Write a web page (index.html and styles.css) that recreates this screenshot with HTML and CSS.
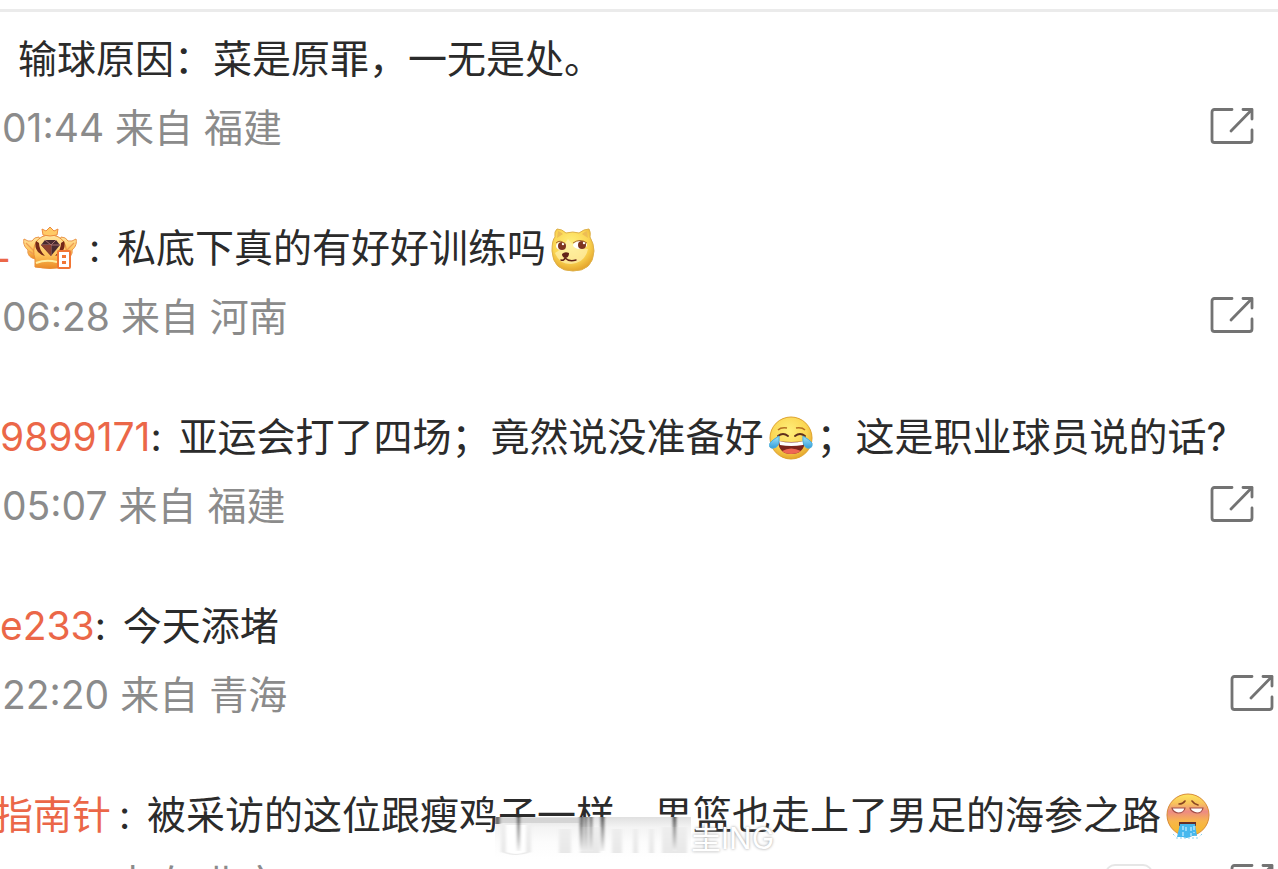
FILE: index.html
```html
<!DOCTYPE html>
<html lang="zh-CN">
<head>
    <meta charset="UTF-8">
    <meta name="viewport" content="width=device-width, initial-scale=1.0">
    <title>评论</title>
    <link rel="stylesheet" href="styles.css">
</head>
<body>
    <svg class="sprite" aria-hidden="true">
        <symbol id="share" viewBox="0 0 44 38">
            <path d="M22 2.500H4.500Q2 2.500 2 5V33Q2 35.500 4.500 35.500H39.500Q42 35.500 42 33V23M33 2.500H42V12M42 2.500 21 24" fill="none" stroke="#737373" stroke-width="2.800" stroke-linecap="round" stroke-linejoin="round"/>
        </symbol>
        <radialGradient id="face" cx="45%" cy="35%" r="65%">
            <stop offset="0" stop-color="#fff07c"/>
            <stop offset=".65" stop-color="#fbd653"/>
            <stop offset="1" stop-color="#e5a62d"/>
        </radialGradient>
        <linearGradient id="gold" x2="0" y2="1">
            <stop offset="0" stop-color="#ffe5a0"/>
            <stop offset=".6" stop-color="#ffc45b"/>
            <stop offset="1" stop-color="#e98925"/>
        </linearGradient>
        <linearGradient id="blush" x2="0" y2="1">
            <stop offset="0" stop-color="#ffe65f"/>
            <stop offset=".22" stop-color="#f8c45b"/>
            <stop offset=".42" stop-color="#ed8a83"/>
            <stop offset=".65" stop-color="#f8b64b"/>
            <stop offset="1" stop-color="#f5ba23"/>
        </linearGradient>
        <linearGradient id="tear" x2="0" y2="1">
            <stop offset="0" stop-color="#a5e5fb"/>
            <stop offset="1" stop-color="#349fda"/>
        </linearGradient>
    </svg>

    <main class="comments">
        <article class="comment">
            <p class="text indent">输球原因：菜是原罪，一无是处。</p>
            <div class="info">
                <span>01:44 来自 福建</span>
                <button class="share" aria-label="分享"><svg><use href="#share"/></svg></button>
            </div>
        </article>

        <article class="comment">
            <p class="text">
                <a class="name initial" href="#">L</a>
                <svg class="crown" viewBox="0 0 54 44" role="img" aria-label="会员">
                    <path d="M14 33C7 33 4 28 5 24C1 21 0 16 1 13Q5 16 9 15Q11 11 16 11L22 32ZM40 33C47 33 50 28 49 24C53 21 54 16 53 13Q49 16 45 15Q43 11 38 11L32 32Z" fill="url(#gold)" stroke="#ea9548"/>
                    <path d="M3 17 13 27M6 25 13 30M51 17 41 27M48 25 41 30" stroke="#ee9d55" stroke-width="1.300" fill="none"/>
                    <path d="M12 41V33Q9 24 13 16Q18 9 27 9Q36 9 41 16Q45 24 42 33V41Q27 44 12 41Z" fill="url(#gold)" stroke="#e98d35"/>
                    <path d="M20 9 19 3 23 5 27 1 31 5 35 3 34 9Q27 11 20 9Z" fill="#ffca66" stroke="#ed8b3f"/>
                    <path d="M13 15Q11 21 15 26Q18 29 22 30Q16 24 16 17ZM41 15Q43 21 39 26Q36 29 32 30Q38 24 38 17Z" fill="#742819"/>
                    <path d="M22 14H33L37 19 28 30 18 19Z" fill="#482b30"/>
                    <path d="M22 14 28 19 33 14M28 19V30M18 19H37" fill="none" stroke="#a8706d"/>
                    <path d="M18 19h10v11z" fill="#8c402f"/>
                    <path d="M13 37Q23 33 34 36" fill="none" stroke="#fff0a6" stroke-width="2"/>
                    <rect x="35" y="25" width="12" height="17" rx="1" fill="#fff" stroke="#f17634" stroke-width="2"/>
                    <path d="M39 29h4v3h-4zM39 35h4v3h-4z" fill="#f17634"/>
                </svg>
                <span class="colon">:</span>私底下真的有好好训练吗<svg class="emoji" viewBox="0 0 44 46" role="img" aria-label="狗头">
                    <path d="M1 25Q1 14 4 11Q3 5 6 3Q11 3 15 7Q22 5 28 7Q33 3 38 3Q40 6 39 11Q43 18 43 25Q42 45 22 45Q2 45 1 25Z" fill="url(#face)" stroke="#deb14b"/>
                    <path d="M7 5Q10 6 12 8L6 12ZM36 5Q33 6 31 8L37 12Z" fill="#edbd55"/>
                    <path d="M4 27Q10 24 17 13Q23 23 37 23Q34 37 20 38Q8 38 4 27Z" fill="#fff3bd" opacity=".6"/>
                    <ellipse cx="10" cy="20" rx="5" ry="4" fill="#fff"/>
                    <ellipse cx="29" cy="19" rx="7" ry="4" fill="#fff"/>
                    <circle cx="11" cy="20" r="4" fill="#7d3521"/>
                    <circle cx="31" cy="19" r="4" fill="#7d3521"/>
                    <circle cx="12" cy="18" r="1.200" fill="#fff"/>
                    <circle cx="33" cy="17" r="1.200" fill="#fff"/>
                    <path d="M5 17Q9 13 14 18M22 17Q29 12 36 17" fill="none" stroke="#a7652d"/>
                    <path d="M11 28Q14 25 18 27Q18 32 14 32Q11 31 11 28Z" fill="#632219"/>
                    <path d="M14 32Q13 35 10 34M14 32Q18 36 25 34" fill="none" stroke="#632219" stroke-width="1.500" stroke-linecap="round"/>
                </svg>
            </p>
            <div class="info">
                <span>06:28 来自 河南</span>
                <button class="share" aria-label="分享"><svg><use href="#share"/></svg></button>
            </div>
        </article>

        <article class="comment">
            <p class="text">
                <a class="name" href="#">9899171</a><span class="colon narrow">:</span>亚运会打了四场；竟然说没准备好<svg class="emoji" viewBox="0 0 44 46" role="img" aria-label="笑cry">
                    <circle cx="22" cy="23" r="21" fill="url(#face)" stroke="#dfa32d"/>
                    <path d="M9 15Q12 12 18 13M27 13Q33 12 36 15" fill="none" stroke="#b66f21" stroke-width="1.500"/>
                    <path d="M9 21Q14 17 19 21M26 21Q31 17 36 21" fill="none" stroke="#60301b" stroke-width="2" stroke-linecap="round"/>
                    <path d="M9 26Q22 28 36 26Q35 39 22 39Q10 39 9 26Z" fill="#7b241c"/>
                    <path d="M10 26Q22 29 35 26L34 30Q22 32 11 30Z" fill="#fff"/>
                    <path d="M13 36Q22 31 32 36Q28 39 22 39Q16 39 13 36Z" fill="#ef6754"/>
                    <path d="M10 21Q11 32 5 33Q-1 34 1 28Q3 25 10 21ZM34 21Q33 31 38 33Q44 34 43 28Q41 25 34 21Z" fill="url(#tear)" stroke="#4daeda"/>
                </svg>；这是职业球员说的话?
            </p>
            <div class="info">
                <span>05:07 来自 福建</span>
                <button class="share" aria-label="分享"><svg><use href="#share"/></svg></button>
            </div>
        </article>

        <article class="comment edge">
            <p class="text">
                <a class="name" href="#">e233</a><span class="colon narrow">:</span>今天添堵
            </p>
            <div class="info">
                <span>22:20 来自 青海</span>
                <button class="share" aria-label="分享"><svg><use href="#share"/></svg></button>
            </div>
        </article>

        <article class="comment edge">
            <p class="text">
                <a class="name cut" href="#">指南针</a><span class="colon">:</span>被采访的这位跟瘦鸡子一样，男篮也走上了男足的海参之路<svg class="emoji" viewBox="0 0 44 46" role="img" aria-label="吐">
                    <circle cx="22" cy="22" r="21" fill="url(#blush)" stroke="#d88b36"/>
                    <path d="M13 11Q17 11 19 8M26 8Q28 11 32 12" fill="none" stroke="#884522" stroke-width="1.600" stroke-linecap="round"/>
                    <path d="M6 15H19Q18 20 12 20Q7 19 6 15ZM24 15H37Q36 20 31 20Q25 19 24 15Z" fill="#fff" stroke="#a25149" stroke-width="1.200"/>
                    <path d="M13 29H30V33H13Z" fill="#642e29"/>
                    <path d="M14 31H29L31 43Q27 42 24 44Q20 46 17 44L11 44Z" fill="#46b8ee"/>
                    <path d="M17 33v10M20 34v5M25 34v9M28 33v7" stroke="#bdeaff" stroke-width="1.300" stroke-dasharray="4 2"/>
                    <path d="M7 41 10 44M36 41 33 44M10 45h24" stroke="#8bd1ee" stroke-dasharray="2 2"/>
                </svg>
            </p>
            <div class="info">
                <span>10:30 来自 北京</span>
                <button class="more" aria-label="更多"></button>
                <button class="share" aria-label="分享"><svg><use href="#share"/></svg></button>
            </div>
        </article>
    </main>

    <div class="watermark">
        <svg class="smear" viewBox="0 0 196 42" aria-hidden="true">
            <defs>
                <linearGradient id="haze" x2="0" y2="1">
                    <stop offset="0" stop-color="#e0e0e0"/>
                    <stop offset=".25" stop-color="#f4f4f4"/>
                    <stop offset=".6" stop-color="#fcfcfc"/>
                    <stop offset="1" stop-color="#fff"/>
                </linearGradient>
                <linearGradient id="streak" x2="0" y2="1">
                    <stop offset="0" stop-color="#333"/>
                    <stop offset=".4" stop-color="#888"/>
                    <stop offset="1" stop-color="#f0f0f0"/>
                </linearGradient>
                <linearGradient id="shade" x2="0" y2="1">
                    <stop offset="0" stop-color="#eee"/>
                    <stop offset="1" stop-color="#e2e2e2"/>
                </linearGradient>
                <filter id="soft" x="-5%" width="110%"><feGaussianBlur stdDeviation="1.500 0.600"/></filter>
            </defs>
            <rect width="196" height="42" fill="url(#haze)"/>
            <g filter="url(#soft)">
                <path d="M6 6h30v29q-15 6-30 0zM64 12h12v24H64zM85 10h20v26H85zM117 12h10v24h-10zM138 12h5v24h-5zM154 12h5v24h-5zM167 10h25v26h-25z" fill="url(#shade)" opacity=".8"/>
                <path d="M11 8h20v27q-10 4-20 0z" fill="#fff"/>
                <path d="M0 0h5v7H0z" fill="#666"/>
                <path d="M5 1h80v5H5z" fill="#ccc" opacity=".7"/>
                <path d="M22 0h3v34h-3zM85 0h3v34h-3zM90 0h2v34h-2zM95 0h2v34h-2zM106 0h3v34h-3zM178 0h3v34h-3z" fill="url(#streak)"/>
            </g>
        </svg>
        <span>圭ING</span>
    </div>
</body>
</html>
```

FILE: styles.css
```css
* {
    margin: 0;
    padding: 0;
    box-sizing: border-box;
}

body {
    position: relative;
    height: 100vh;
    overflow: hidden;
    background-color: #fff;
    color: #2b2b2b;
    font-family: Inter, "Noto Sans CJK SC", sans-serif;
    font-size: 39px;
    line-height: 60px;
}

.sprite {
    position: absolute;
    width: 0;
    height: 0;
}

.comments {
    margin-top: 9px;
    border-top: 3px solid #ebebeb;
    padding-top: 17px;
}

.comment {
    height: 189px;
    padding-right: 24px;
}

.comment.edge {
    padding-right: 4px;
}

.text {
    display: flex;
    align-items: center;
    height: 60px;
    white-space: nowrap;
}

.indent {
    padding-left: 18px;
}

.name {
    color: #eb6748;
    text-decoration: none;
}

.name.cut {
    margin-left: -6px;
}

.name.initial {
    margin-left: -12px;
}

.colon {
    width: 36px;
    padding-left: 8px;
}

.colon.narrow {
    width: 28px;
    padding-left: 0;
}

.crown {
    width: 54px;
    height: 44px;
    margin: 0 4px 0 13px;
}

.emoji {
    flex: none;
    width: 44px;
    height: 46px;
    margin: 2px 4px 0 5px;
}

.info {
    display: flex;
    align-items: center;
    justify-content: space-between;
    height: 78px;
    padding-left: 2px;
    color: #8b8b8b;
}

.share {
    width: 44px;
    height: 42px;
    padding-bottom: 4px;
    border: none;
    background: none;
    cursor: pointer;
}

.share svg {
    display: block;
    width: 44px;
    height: 38px;
}

.more {
    width: 48px;
    height: 40px;
    margin-left: auto;
    margin-right: 77px;
    border: 2px solid #e6e6e6;
    border-radius: 10px;
    background: none;
    cursor: pointer;
}

/* Marca sobre o último comentário */
.watermark {
    position: absolute;
    left: 495px;
    bottom: 10px;
    display: flex;
    align-items: center;
    color: #fff;
    font-size: 30px;
    line-height: 42px;
    text-shadow: 0 0 3px #999;
}

.smear {
    width: 196px;
    height: 42px;
}
```
